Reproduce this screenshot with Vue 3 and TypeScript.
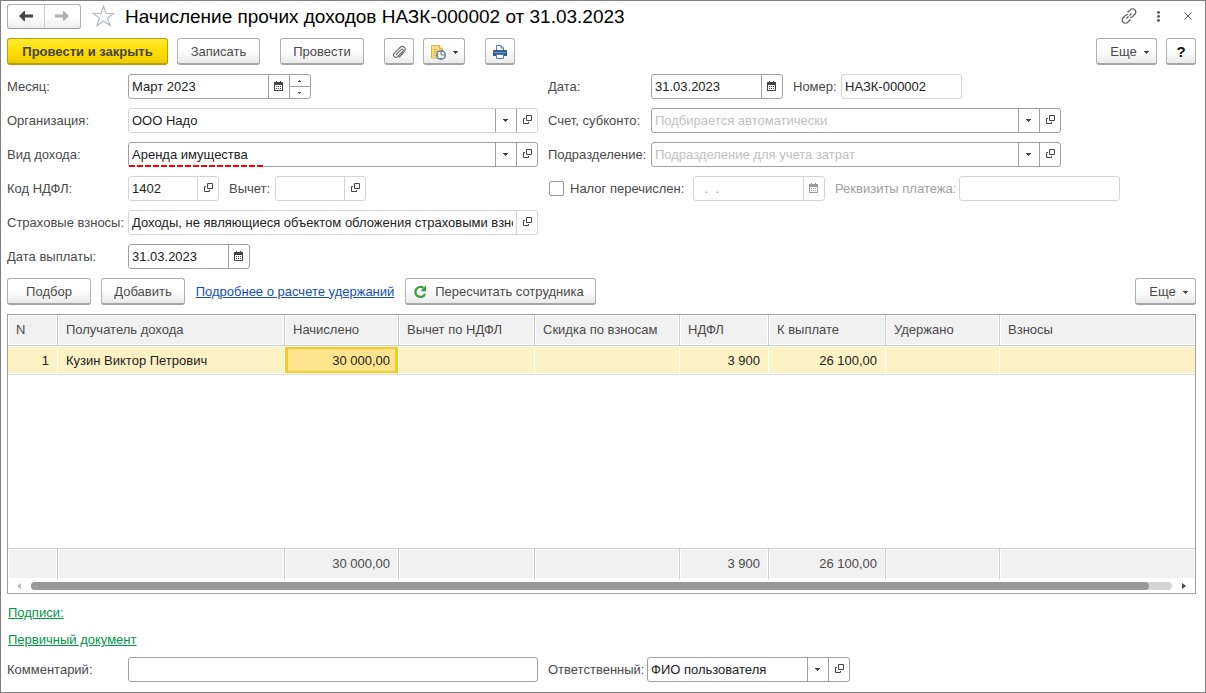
<script setup lang="ts">
import { ref } from 'vue'

type Column = { key: string; title: string; width: number; numeric?: boolean }
type Row = Record<string, string>

const columns: Column[] = [
  { key: 'n', title: 'N', width: 50, numeric: true },
  { key: 'person', title: 'Получатель дохода', width: 227 },
  { key: 'accrued', title: 'Начислено', width: 114, numeric: true },
  { key: 'deduction', title: 'Вычет по НДФЛ', width: 136, numeric: true },
  { key: 'discount', title: 'Скидка по взносам', width: 145, numeric: true },
  { key: 'tax', title: 'НДФЛ', width: 89, numeric: true },
  { key: 'payout', title: 'К выплате', width: 117, numeric: true },
  { key: 'withheld', title: 'Удержано', width: 114, numeric: true },
  { key: 'fees', title: 'Взносы', width: 195, numeric: true },
]
const rows: Row[] = [
  { n: '1', person: 'Кузин Виктор Петрович', accrued: '30 000,00', tax: '3 900', payout: '26 100,00' },
]
const totals: Row = { accrued: '30 000,00', tax: '3 900', payout: '26 100,00' }

const month = ref('Март 2023')
const organization = ref('ООО Надо')
const incomeKind = ref('Аренда имущества')
const incomeCode = ref('1402')
const deductionCode = ref('')
const insurance = ref('Доходы, не являющиеся объектом обложения страховыми взносами')
const payDate = ref('31.03.2023')
const docDate = ref('31.03.2023')
const docNumber = ref('НАЗК-000002')
const account = ref('')
const department = ref('')
const taxPaid = ref(false)
const taxDate = ref(' .  .')
const paymentDetails = ref('')
const comment = ref('')
const responsible = ref('ФИО пользователя')
</script>

<template>
  <svg class="defs" width="0" height="0" aria-hidden="true">
    <symbol id="i-cal" viewBox="0 0 9 10">
      <path d="M0 1h9v9H0z" fill="currentColor" />
      <path d="M2 0h1v2H2zM6 0h1v2H6z" fill="currentColor" />
      <path d="M1 4h7v5H1z" fill="#fff" />
      <path d="M2 5h1v1H2zM4 5h1v1H4zM6 5h1v1H6zM2 7h1v1H2zM4 7h1v1H4zM6 7h1v1H6z" fill="currentColor" />
    </symbol>
    <symbol id="i-open" viewBox="-2 0 11 10">
      <path d="M3.500.5h5v5h-5zM2 3.500H.5v5h5V7" fill="none" stroke="currentColor" />
    </symbol>
    <symbol id="i-caret" viewBox="0 -1 5 4">
      <path d="M0 0h5v1H4v1H3v1H2V2H1V1H0z" fill="currentColor" />
    </symbol>
  </svg>

  <main class="window">
    <header class="titlebar">
      <div class="nav">
        <button type="button" aria-label="Назад">
          <svg width="14" height="10" viewBox="0 0 14 10"><path d="M0 5l5-5h1v3.500h8v3H6V10H5z" fill="#444" /></svg>
        </button>
        <button type="button" aria-label="Вперед">
          <svg width="14" height="10" viewBox="0 0 14 10"><path d="M14 5L9 0H8v3.500H0v3h8V10h1z" fill="#b0b0b0" /></svg>
        </button>
      </div>
      <button type="button" class="plain star" aria-label="В избранное">
        <svg width="23" height="22" viewBox="0 0 23 22"><path d="M11.500 1.300l2.600 7.200h7.700l-6.200 4.600 2.400 7.500-6.500-4.600L5 20.600l2.400-7.500L1.200 8.500h7.700z" fill="none" stroke="#b4bac2" stroke-width="1.200" /></svg>
      </button>
      <h1>Начисление прочих доходов НАЗК-000002 от 31.03.2023</h1>
      <div class="window-tools">
        <button type="button" class="plain" aria-label="Ссылка">
          <svg width="16" height="16" viewBox="0 0 16 16" fill="none" stroke="#555" stroke-width="1.200">
            <path d="M6.500 4.500l2.700-2.700a3 3 0 0 1 4.600 0 3 3 0 0 1 0 4.500L11.500 8.600a3 3 0 0 1-2.300.8" />
            <path d="M9.500 11.500l-2.700 2.700a3 3 0 0 1-4.600 0 3 3 0 0 1 0-4.500L4.500 7.400a3 3 0 0 1 2.300-.8" />
            <path d="M5.500 10.500l2-2M8.500 7.500l2-2" />
          </svg>
        </button>
        <button type="button" class="plain" aria-label="Меню окна">
          <svg width="3" height="11" viewBox="0 0 3 11" fill="#555"><circle cx="1.500" cy="1.500" r="1.400" /><circle cx="1.500" cy="5.500" r="1.400" /><circle cx="1.500" cy="9.500" r="1.400" /></svg>
        </button>
        <button type="button" class="plain close" aria-label="Закрыть">
          <svg width="8" height="8" viewBox="0 0 8 8"><path d="M.5.5l7 7M7.500.5l-7 7" stroke="#555" fill="none" /></svg>
        </button>
      </div>
    </header>

    <div class="toolbar">
      <div class="group">
        <button type="button" class="btn primary">Провести и закрыть</button>
        <button type="button" class="btn save">Записать</button>
      </div>
      <button type="button" class="btn">Провести</button>
      <div class="group">
        <button type="button" class="btn icon" aria-label="Файлы">
          <svg width="14" height="14" viewBox="0 0 14 14" fill="none" stroke="#666" stroke-width="1.100" stroke-linecap="round">
            <path d="M4.200 9.600l5-5.200a1.200 1.200 0 0 1 1.700 1.700l-5.400 5.600a2.300 2.300 0 0 1-3.300-3.300l5.900-6.100a3 3 0 0 1 4.300 4.300l-5.200 5.400" />
          </svg>
        </button>
        <button type="button" class="btn icon menu" aria-label="Создать на основании">
          <svg width="16" height="16" viewBox="0 0 16 16">
            <path d="M1.500 1.500h8l3 3v9.500h-11z" fill="#f7dc84" stroke="#d9b24a" />
            <path d="M9.500 1.500v3h3" fill="#fff3c4" stroke="#d9b24a" />
            <path d="M3.500 5.500h4M3.500 7.500h4M3.500 9.500h2M3.500 11.500h2" stroke="#d3ad48" />
            <circle cx="11" cy="11" r="4.200" fill="#fff" stroke="#4a78a8" stroke-width="1.400" />
            <path d="M11 11V8M11 11h2.500" stroke="#4a78a8" fill="none" />
            <path d="M10.500 7.500h1v1h-1zM10.500 13.500h1v1h-1zM7.500 10.500h1v1h-1zM13.500 10.500h1v1h-1z" fill="#e03030" />
          </svg>
          <svg width="5" height="4"><use href="#i-caret" /></svg>
        </button>
      </div>
      <button type="button" class="btn icon" aria-label="Печать">
        <svg width="14" height="14" viewBox="0 0 14 14">
          <path d="M3.500 6V.5H8L10.500 3v3" fill="#fff" stroke="#5b7ea3" />
          <path d="M8 .5V3h2.500" fill="none" stroke="#5b7ea3" />
          <path d="M1 5h12a1 1 0 0 1 1 1v5H0V6a1 1 0 0 1 1-1z" fill="#2f5d8c" />
          <path d="M1 7h12v1H1z" fill="#6f9bc6" />
          <path d="M3.500 9.500h7v4h-7z" fill="#fff" stroke="#5b7ea3" />
        </svg>
      </button>
      <div class="group end">
        <button type="button" class="btn more">Еще <svg width="5" height="4"><use href="#i-caret" /></svg></button>
        <button type="button" class="btn icon help">?</button>
      </div>
    </div>

    <form class="form" @submit.prevent>
      <div class="column">
        <div class="line">
          <label class="caption" for="month">Месяц:</label>
          <div class="field month">
            <input id="month" v-model="month" type="text">
            <button type="button" aria-label="Выбрать месяц"><svg width="9" height="10"><use href="#i-cal" /></svg></button>
            <span class="spin">
              <button type="button" aria-label="Больше"><svg width="3" height="2" viewBox="0 0 3 2"><path d="M1 0h1v1h1v1H0V1h1z" fill="#555" /></svg></button>
              <button type="button" aria-label="Меньше"><svg width="3" height="2" viewBox="0 0 3 2"><path d="M0 0h3v1H2v1H1V1H0z" fill="#555" /></svg></button>
            </span>
          </div>
        </div>
        <div class="line">
          <label class="caption" for="org">Организация:</label>
          <div class="field wide light dark-split">
            <input id="org" v-model="organization" type="text">
            <button type="button" aria-label="Список организаций"><svg width="5" height="4"><use href="#i-caret" /></svg></button>
            <button type="button" aria-label="Открыть организацию"><svg width="11" height="10"><use href="#i-open" /></svg></button>
          </div>
        </div>
        <div class="line">
          <label class="caption" for="kind">Вид дохода:</label>
          <div class="field wide marked">
            <input id="kind" v-model="incomeKind" type="text">
            <button type="button" aria-label="Список видов дохода"><svg width="5" height="4"><use href="#i-caret" /></svg></button>
            <button type="button" aria-label="Открыть вид дохода"><svg width="11" height="10"><use href="#i-open" /></svg></button>
          </div>
        </div>
        <div class="line">
          <label class="caption" for="code">Код НДФЛ:</label>
          <div class="field code light">
            <input id="code" v-model="incomeCode" type="text">
            <button type="button" aria-label="Открыть код"><svg width="11" height="10"><use href="#i-open" /></svg></button>
          </div>
          <label class="deduction" for="deduction">Вычет:</label>
          <div class="field code light">
            <input id="deduction" v-model="deductionCode" type="text">
            <button type="button" aria-label="Открыть вычет"><svg width="11" height="10"><use href="#i-open" /></svg></button>
          </div>
        </div>
        <div class="line">
          <label class="caption" for="insurance">Страховые взносы:</label>
          <div class="field wide light">
            <input id="insurance" v-model="insurance" type="text">
            <button type="button" aria-label="Открыть вид взносов"><svg width="11" height="10"><use href="#i-open" /></svg></button>
          </div>
        </div>
        <div class="line">
          <label class="caption" for="paydate">Дата выплаты:</label>
          <div class="field pay">
            <input id="paydate" v-model="payDate" type="text">
            <button type="button" aria-label="Выбрать дату выплаты"><svg width="9" height="10"><use href="#i-cal" /></svg></button>
          </div>
        </div>
      </div>

      <div class="column right">
        <div class="line">
          <label class="caption" for="date">Дата:</label>
          <div class="field date">
            <input id="date" v-model="docDate" type="text">
            <button type="button" aria-label="Выбрать дату"><svg width="9" height="10"><use href="#i-cal" /></svg></button>
          </div>
          <label class="number" for="number">Номер:</label>
          <div class="field num light"><input id="number" v-model="docNumber" type="text"></div>
        </div>
        <div class="line">
          <label class="caption" for="account">Счет, субконто:</label>
          <div class="field wide">
            <input id="account" v-model="account" type="text" placeholder="Подбирается автоматически">
            <button type="button" aria-label="Список счетов"><svg width="5" height="4"><use href="#i-caret" /></svg></button>
            <button type="button" aria-label="Открыть счет"><svg width="11" height="10"><use href="#i-open" /></svg></button>
          </div>
        </div>
        <div class="line">
          <label class="caption" for="department">Подразделение:</label>
          <div class="field wide">
            <input id="department" v-model="department" type="text" placeholder="Подразделение для учета затрат">
            <button type="button" aria-label="Список подразделений"><svg width="5" height="4"><use href="#i-caret" /></svg></button>
            <button type="button" aria-label="Открыть подразделение"><svg width="11" height="10"><use href="#i-open" /></svg></button>
          </div>
        </div>
        <div class="line">
          <label class="check"><input v-model="taxPaid" type="checkbox">Налог перечислен:</label>
          <div class="field date light off">
            <input v-model="taxDate" type="text" aria-label="Дата перечисления налога" disabled>
            <button type="button" aria-label="Выбрать дату перечисления" disabled><svg width="9" height="10"><use href="#i-cal" /></svg></button>
          </div>
          <label class="details" for="details">Реквизиты платежа:</label>
          <div class="field pay-details light"><input id="details" v-model="paymentDetails" type="text" disabled></div>
        </div>
      </div>
    </form>

    <div class="toolbar commands">
      <button type="button" class="btn">Подбор</button>
      <button type="button" class="btn">Добавить</button>
      <a class="info" href="#withholding">Подробнее о расчете удержаний</a>
      <button type="button" class="btn recalc">
        <svg width="14" height="14" viewBox="0 0 14 14"><path d="M10.500 3A5 5 0 1 0 12 9" fill="none" stroke="#2fa336" stroke-width="2.200" /><path d="M13 .6v5.600H7.400z" fill="#2fa336" /></svg>
        Пересчитать сотрудника
      </button>
      <div class="group end">
        <button type="button" class="btn more">Еще <svg width="5" height="4"><use href="#i-caret" /></svg></button>
      </div>
    </div>

    <section class="grid">
      <table>
        <colgroup><col v-for="c in columns" :key="c.key" :style="{ width: c.width + 'px' }"></colgroup>
        <thead>
          <tr><th v-for="c in columns" :key="c.key" scope="col">{{ c.title }}</th></tr>
        </thead>
        <tbody>
          <tr v-for="r in rows" :key="r.n" class="selected">
            <td v-for="c in columns" :key="c.key" :class="{ numeric: c.numeric, current: c.key === 'accrued' }">{{ r[c.key] }}</td>
          </tr>
          <tr class="filler"><td :colspan="columns.length"></td></tr>
        </tbody>
        <tfoot>
          <tr><td v-for="c in columns" :key="c.key" :class="{ numeric: c.numeric }">{{ totals[c.key] }}</td></tr>
        </tfoot>
      </table>
      <div class="scroll" aria-hidden="true">
        <svg width="4" height="6" viewBox="0 0 4 6"><path d="M4 0v6L0 3z" fill="#bbb" /></svg>
        <div class="track"><div class="thumb"></div></div>
        <svg width="4" height="6" viewBox="0 0 4 6"><path d="M0 0v6l4-3z" fill="#444" /></svg>
      </div>
    </section>

    <nav class="links">
      <a href="#signatures">Подписи:</a>
      <a href="#source">Первичный документ</a>
    </nav>

    <footer class="form">
      <div class="line">
        <label class="caption" for="comment">Комментарий:</label>
        <div class="field wide"><input id="comment" v-model="comment" type="text"></div>
      </div>
      <div class="line">
        <label class="responsible" for="responsible">Ответственный:</label>
        <div class="field user">
          <input id="responsible" v-model="responsible" type="text">
          <button type="button" aria-label="Список пользователей"><svg width="5" height="4"><use href="#i-caret" /></svg></button>
          <button type="button" aria-label="Открыть пользователя"><svg width="11" height="10"><use href="#i-open" /></svg></button>
        </div>
      </div>
    </footer>
  </main>
</template>

<style>
body {
  margin: 0;
  background: #fff;
}
</style>

<style scoped>
* {
  box-sizing: border-box;
}
.defs {
  position: absolute;
}
.window {
  display: flex;
  flex-direction: column;
  min-height: 100vh;
  padding: 3px 9px 10px 6px;
  border: 1px solid #808080;
  background: #fff;
  color: #4a4a4a;
  font: 13px/16px "Liberation Sans", Arial, sans-serif;
}
button,
input {
  margin: 0;
  font: inherit;
  color: inherit;
}
button {
  padding: 0;
  border: 0;
  background: none;
}
svg {
  display: block;
  flex: none;
}

.titlebar {
  display: flex;
  align-items: center;
  height: 24px;
}
.nav {
  display: flex;
  width: 74px;
  height: 25px;
  border: 1px solid #b0b0b0;
  border-bottom-color: #999;
  border-radius: 3px;
  background: linear-gradient(#fff 50%, #ececec);
}
.nav button {
  flex: 1;
  display: flex;
  align-items: center;
  justify-content: center;
}
.nav button + button {
  border-left: 1px solid #ccc;
}
.star {
  margin: 0 10px 0 11px;
}
h1 {
  margin: 0;
  padding-top: 1px;
  color: #000;
  font-size: 19px;
  line-height: 24px;
  font-weight: 400;
  white-space: nowrap;
}
.window-tools {
  display: flex;
  align-items: center;
  gap: 20px;
  margin-left: auto;
  padding-right: 4px;
}
.close {
  padding-left: 4px;
}

.toolbar {
  display: flex;
  align-items: center;
  gap: 20px;
  margin-top: 10px;
}
.group {
  display: flex;
  gap: 9px;
}
.end {
  margin-left: auto;
}
.btn {
  display: flex;
  align-items: center;
  justify-content: center;
  min-width: 84px;
  height: 27px;
  padding-top: 1px;
  border: 1px solid #b0b0b0;
  border-bottom: 2px solid #a6a6a6;
  border-radius: 3px;
  background: linear-gradient(#fff 45%, #ebebeb);
  white-space: nowrap;
}
.primary {
  min-width: 161px;
  border-color: #b8a000;
  background: linear-gradient(#ffe838, #ffdf00 50%, #edcb00);
  color: #444;
  font-weight: 700;
}
.save {
  min-width: 83px;
}
.icon {
  min-width: 30px;
}
.menu {
  min-width: 42px;
  gap: 7px;
}
.more {
  min-width: 61px;
  gap: 7px;
  padding-left: 6px;
}
.help {
  color: #111;
  font-size: 15px;
  font-weight: 700;
}
.commands {
  gap: 10px;
  margin-top: 9px;
}
.recalc {
  min-width: 191px;
  gap: 8px;
  padding-right: 4px;
}
.info {
  min-width: 200px;
  color: #1450b4;
  text-align: center;
  white-space: nowrap;
}

.form {
  display: grid;
  grid-template-columns: 531fr 648fr;
  gap: 10px;
  margin-top: 9px;
}
.column {
  display: flex;
  flex-direction: column;
  gap: 9px;
  min-width: 0;
}
.line {
  display: flex;
  align-items: center;
  min-width: 0;
}
label {
  flex: none;
  white-space: nowrap;
}
.caption {
  width: 121px;
}
.right .caption {
  width: 103px;
}
.deduction {
  width: 56px;
  padding-left: 10px;
}
.number {
  width: 58px;
  padding-left: 10px;
}
.details {
  width: 134px;
  padding-left: 10px;
  color: #a0a0a0;
}
.responsible {
  width: 99px;
}
.check {
  display: flex;
  align-items: center;
  gap: 6px;
  width: 145px;
}
.check input {
  appearance: none;
  width: 15px;
  height: 15px;
  margin-left: 1px;
  border: 1px solid #999;
  border-radius: 2px;
  background: #fff;
}
.check input:checked {
  background: #777;
}

.field {
  --edge: #a0a0a0;
  --split: #a0a0a0;
  display: flex;
  height: 25px;
  border: 1px solid var(--edge);
  border-radius: 3px;
  background: #fff;
}
.light {
  --edge: #d4d4d4;
  --split: #d4d4d4;
}
.dark-split {
  --split: #a0a0a0;
}
.field input {
  flex: 1;
  width: 0;
  min-width: 0;
  padding: 0 3px;
  border: 0;
  outline: 0;
  background: none;
  color: #222;
}
.field input::placeholder {
  color: #c0c0c0;
  opacity: 1;
}
.field > button {
  display: flex;
  align-items: center;
  justify-content: center;
  width: 21px;
  padding: 0 1px 1px 0;
  border-left: 1px solid var(--split);
  color: #444;
}
.field.off input,
.field.off > button {
  color: #999;
}
.field.off input {
  white-space: pre;
  padding-left: 7px;
}
.wide {
  flex: 1;
  min-width: 0;
}
.right .wide {
  max-width: 410px;
}
.month {
  width: 183px;
}
.code {
  width: 91px;
}
.pay {
  width: 122px;
}
.date {
  width: 132px;
}
.num {
  width: 121px;
}
.pay-details {
  width: 161px;
}
.user {
  width: 203px;
}
.marked {
  position: relative;
}
.marked::after {
  content: "";
  position: absolute;
  left: 0;
  bottom: -1px;
  width: 134px;
  height: 2px;
  background: repeating-linear-gradient(90deg, #f00 0 6px, #fff 6px 8px);
}
.spin {
  display: flex;
  flex-direction: column;
  width: 21px;
  border-left: 1px solid var(--split);
}
.spin button {
  flex: 1;
  display: flex;
  align-items: center;
  justify-content: center;
  padding-right: 1px;
}
.spin button + button {
  border-top: 1px solid var(--split);
}

.grid {
  flex: 1;
  display: flex;
  flex-direction: column;
  min-height: 160px;
  margin-top: 9px;
  border: 1px solid #a0a0a0;
}
table {
  flex: 1;
  width: 100%;
  border-spacing: 0;
  table-layout: fixed;
}
th,
td {
  overflow: hidden;
  padding: 0 8px;
  font-weight: 400;
  text-align: left;
  white-space: nowrap;
}
th {
  height: 31px;
  border-right: 1px solid #ccc;
  border-bottom: 1px solid #ccc;
  background: #f1f1f1;
  box-shadow: inset 0 0 0 1px #fff;
}
.selected td {
  height: 29px;
  padding-top: 2px;
  border-right: 1px solid #fff;
  border-bottom: 1px solid #ddd;
  background: #fdf1c6;
  box-shadow: inset 0 1px #fff, inset 0 -1px #fff;
  color: #222;
}
.selected td.current {
  background: #ffe48e;
  box-shadow: inset 0 1px #fff, inset 0 -1px #fff, inset 0 0 0 3px #f9c922;
}
tfoot td {
  height: 31px;
  border-top: 1px solid #ccc;
  border-right: 1px solid #ccc;
  background: #f1f1f1;
  box-shadow: inset 0 0 0 1px #fff;
}
th:last-child,
td:last-child {
  border-right: 0;
}
td.numeric {
  text-align: right;
}
.scroll {
  display: flex;
  align-items: center;
  gap: 10px;
  height: 14px;
  padding: 0 9px;
}
.track {
  flex: 1;
  height: 8px;
  border-radius: 4px;
  background: #d4d4d4;
}
.thumb {
  width: 98%;
  height: 8px;
  border-radius: 4px;
  background: #999;
}

.links {
  display: flex;
  flex-direction: column;
  align-items: flex-start;
  gap: 11px;
  margin-top: 11px;
  padding-left: 1px;
}
.links a {
  color: #009646;
}
</style>
